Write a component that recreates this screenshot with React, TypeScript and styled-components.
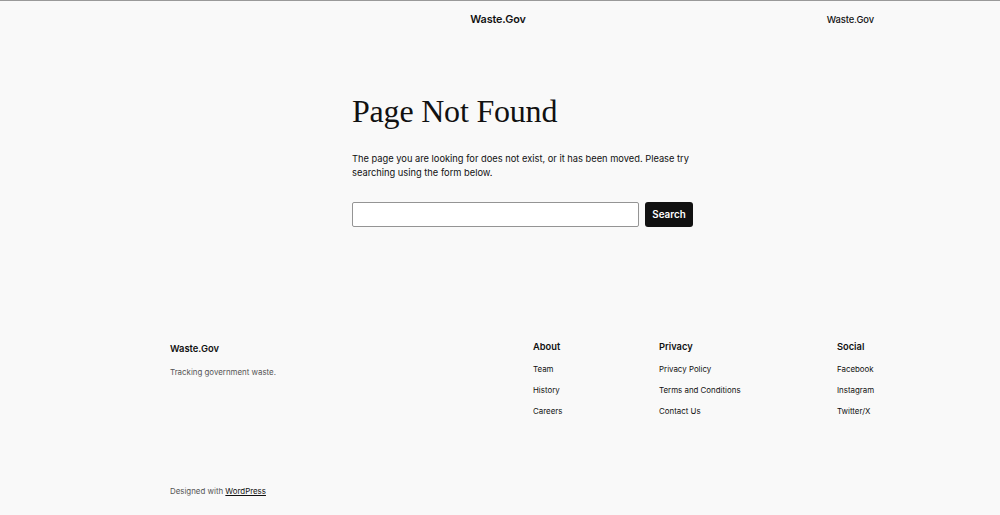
import React from "react";
import styled, { createGlobalStyle } from "styled-components";

const Global = createGlobalStyle`
  html, body { margin: 0; padding: 0; background: #f9f9f9; }
  body { font-family: Inter, "Noto Sans", sans-serif; color: #111; }
  * { box-sizing: border-box; }
`;

const Page = styled.div`
  width: 1000px;
  height: 515px;
  border-top: 1px solid #9a9a9a;
  display: flex;
  flex-direction: column;
  overflow: hidden;
`;

const Header = styled.header`
  display: grid;
  grid-template-columns: 1fr auto 1fr;
  align-items: center;
  height: 36px;
  padding: 0 126px 0 122px;
`;

const SiteTitle = styled.div<{ $size: number; $weight: number }>`
  font-size: ${(p) => p.$size}px;
  font-weight: ${(p) => p.$weight};
  letter-spacing: -0.1px;
`;

const RightTitle = styled(SiteTitle)`
  justify-self: end;
`;

const Main = styled.main`
  width: 345px;
  margin-left: 352px;
  padding-top: 54px;
  height: 304px;
`;

const Heading = styled.h1`
  margin: 0;
  font-family: "Liberation Serif", "DejaVu Serif", serif;
  font-weight: 400;
  font-size: 32px;
  line-height: 40px;
  letter-spacing: -0.2px;
`;

const Text = styled.p`
  margin: 21px 0 0;
  font-size: 9.3px;
  line-height: 14px;
`;

const SearchRow = styled.form`
  display: flex;
  gap: 6px;
  margin-top: 22px;
`;

const Input = styled.input`
  width: 287px;
  height: 25px;
  border: 1px solid #949494;
  border-radius: 2px;
  background: #fff;
`;

const Button = styled.button`
  width: 48px;
  height: 25px;
  border: none;
  border-radius: 3px;
  background: #111;
  color: #fff;
  font-family: Inter, sans-serif;
  font-size: 9.8px;
  font-weight: 600;
  padding: 0;
`;

const Footer = styled.footer`
  padding-left: 170px;
  display: flex;
  flex-direction: column;
`;

const FooterGrid = styled.div`
  display: grid;
  grid-template-columns: 363px 126px 178px auto;
  align-items: start;
`;

const Brand = styled.div`
  display: flex;
  flex-direction: column;
  padding-top: 2px;
`;

const BrandName = styled.div`
  font-size: 9.4px;
  font-weight: 600;
  line-height: 12px;
`;

const Tagline = styled.div`
  margin-top: 11px;
  font-size: 7.9px;
  color: #555;
  line-height: 12px;
`;

const Col = styled.div`
  display: flex;
  flex-direction: column;
`;

const ColTitle = styled.div`
  font-size: 9.3px;
  font-weight: 600;
  line-height: 12px;
  margin-bottom: 6px;
`;

const Link = styled.a`
  font-size: 7.9px;
  line-height: 21px;
  color: #111;
  text-decoration: none;
`;

const Credit = styled.div`
  margin-top: 64px;
  font-size: 7.9px;
  color: #555;
  a { color: #111; text-decoration: underline; }
`;

const cols = [
  { title: "About", links: ["Team", "History", "Careers"] },
  { title: "Privacy", links: ["Privacy Policy", "Terms and Conditions", "Contact Us"] },
  { title: "Social", links: ["Facebook", "Instagram", "Twitter/X"] },
];

export default function App() {
  return (
    <>
      <Global />
      <Page>
        <Header>
          <span />
          <SiteTitle $size={10.8} $weight={600}>Waste.Gov</SiteTitle>
          <RightTitle $size={9.4} $weight={500}>Waste.Gov</RightTitle>
        </Header>
        <Main>
          <Heading>Page Not Found</Heading>
          <Text>
            The page you are looking for does not exist, or it has been moved. Please try searching using the form below.
          </Text>
          <SearchRow onSubmit={(e) => e.preventDefault()}>
            <Input type="search" />
            <Button type="submit">Search</Button>
          </SearchRow>
        </Main>
        <Footer>
          <FooterGrid>
            <Brand>
              <BrandName>Waste.Gov</BrandName>
              <Tagline>Tracking government waste.</Tagline>
            </Brand>
            {cols.map((c) => (
              <Col key={c.title}>
                <ColTitle>{c.title}</ColTitle>
                {c.links.map((l) => (
                  <Link key={l} href="#">{l}</Link>
                ))}
              </Col>
            ))}
          </FooterGrid>
          <Credit>
            Designed with <a href="#">WordPress</a>
          </Credit>
        </Footer>
      </Page>
    </>
  );
}
